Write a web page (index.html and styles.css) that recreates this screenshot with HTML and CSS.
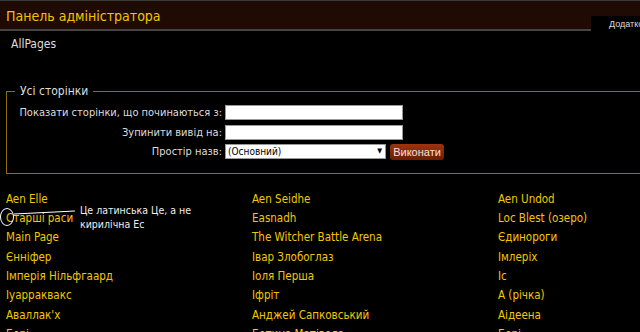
FILE: index.html
```html
<!DOCTYPE html>
<html lang="uk">
<head>
  <meta charset="UTF-8" />
  <title>AllPages</title>
  <link rel="stylesheet" href="styles.css">
</head>
<body>
  <div class="topbar">
    <span class="topbar-title">Панель адміністратора</span>
    <span class="tools-tab">Додаткові</span>
  </div>

  <div class="content">
    <h1 class="page-title">AllPages</h1>

    <fieldset class="filter">
      <legend>Усі сторінки</legend>
      <div class="filter-row">
        <label>Показати сторінки, що починаються з:</label>
        <input type="text" class="field" />
      </div>
      <div class="filter-row">
        <label>Зупинити вивід на:</label>
        <input type="text" class="field" />
      </div>
      <div class="filter-row">
        <label>Простір назв:</label>
        <div class="select-box">(Основний)<span class="arrow">▼</span></div>
        <button class="go">Виконати</button>
      </div>
    </fieldset>

    <div class="page-list">
      <a>Aen Elle</a><a>Aen Seidhe</a><a>Aen Undod</a>
      <a>Cтарші раси</a><a>Easnadh</a><a>Loc Blest (озеро)</a>
      <a>Main Page</a><a>The Witcher Battle Arena</a><a>Єдинороги</a>
      <a>Єнніфер</a><a>Івар Злобоглаз</a><a>Імлеріх</a>
      <a>Імперія Нільфгаард</a><a>Іоля Перша</a><a>Іс</a>
      <a>Іуарраквакс</a><a>Іфріт</a><a>А (річка)</a>
      <a>Аваллак'х</a><a>Анджей Сапковський</a><a>Аідеена</a>
      <a>Бері</a><a>Бетина Матівела</a><a>Бері</a>
    </div>

    <!-- позначка на скріншоті -->
    <div class="note-circle"></div>
    <div class="note-line"></div>
    <div class="note-text">Це латинська Це, а не<br>кирилічна Ес</div>
  </div>
</body>
</html>
```

FILE: styles.css
```css
body {
  margin: 0;
  background: #000;
  color: #ddd;
  font-family: "DejaVu Sans Condensed", "DejaVu Sans", sans-serif;
  width: 760px;
  overflow: hidden;
}

.topbar {
  position: relative;
  height: 28px;
  background: #1f0b03;
  border-top: 1px solid #3a3a3a;
  border-bottom: 2px solid #444;
  padding-left: 6px;
  display: flex;
  align-items: center;
}

.topbar-title {
  color: #f3c400;
  font-size: 14px;
  margin-top: 1px;
}

.tools-tab {
  position: absolute;
  left: 591px;
  top: 15px;
  width: 80px;
  height: 15px;
  background: #000;
  color: #ddd;
  font-family: "Liberation Sans", sans-serif;
  font-size: 9px;
  padding: 3px 0 0 18px;
  box-sizing: border-box;
  z-index: 2;
}

.content {
  position: relative;
  padding: 0 0 0 6px;
}

.page-title {
  margin: 6px 0 0 5px;
  font-size: 12px;
  font-weight: normal;
  color: #ddd;
  font-family: "DejaVu Sans Condensed", sans-serif;
}

.filter {
  margin: 33px 0 0 0;
  border: 1px solid #8c7000;
  padding: 5px 0 11px 0;
  width: 740px;
}

.filter legend {
  margin-left: 8px;
  padding: 0 5px;
  color: #ddd;
  font-size: 12px;
}

.filter-row {
  display: flex;
  align-items: center;
  height: 19.5px;
  font-size: 11px;
  color: #ddd;
}

.filter-row label {
  width: 215px;
  text-align: right;
  margin-right: 3px;
  white-space: nowrap;
}

.field {
  width: 178px;
  height: 15px;
  border: 1px solid #999;
  padding: 0;
  background: #fff;
  box-sizing: border-box;
}

.select-box {
  position: relative;
  width: 161px;
  height: 15px;
  background: #fff;
  border: 1px solid #999;
  box-sizing: border-box;
  color: #000;
  font-size: 10px;
  padding-left: 2px;
  line-height: 13px;
}

.select-box .arrow {
  position: absolute;
  right: 3px;
  top: 0;
  font-size: 7px;
}

.go {
  margin-left: 4px;
  height: 16px;
  width: 54px;
  border: none;
  border-radius: 3px;
  background: linear-gradient(#9a3510, #6e1c02);
  color: #f0e0e0;
  font-family: "Liberation Sans", sans-serif;
  font-size: 11px;
  padding: 0;
}

.page-list {
  display: grid;
  grid-template-columns: 246px 246px 246px;
  grid-auto-rows: 19.4px;
  margin-top: 16px;
  font-family: "DejaVu Sans Condensed", sans-serif;
  font-size: 11.5px;
}

.page-list a {
  color: #f3c800;
  line-height: 19px;
}

.note-circle {
  position: absolute;
  left: 0;
  top: 171px;
  width: 14px;
  height: 18px;
  border: 1px solid #fff;
  border-radius: 50%;
  box-sizing: border-box;
}

.note-line {
  position: absolute;
  left: 14px;
  top: 175px;
  width: 61px;
  height: 1px;
  background: #fff;
  transform: rotate(-3deg);
}

.note-text {
  position: absolute;
  left: 80px;
  top: 166px;
  color: #eee;
  font-size: 10.5px;
  line-height: 14px;
}
```
